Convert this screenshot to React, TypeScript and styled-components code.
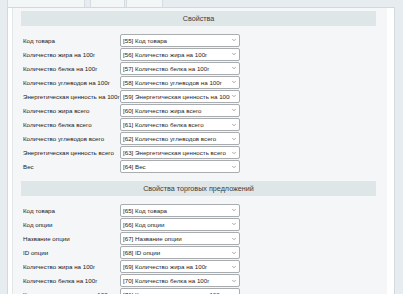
import styled, { createGlobalStyle } from "styled-components";
import { ChevronDown } from "lucide-react";

const GlobalStyle = createGlobalStyle`
  html, body {
    margin: 0;
    padding: 0;
    background: #e6ecef;
    font-family: "Liberation Sans", Arial, sans-serif;
    overflow: hidden;
  }
`;

const tabWidths = [76, 33, 35];

const sections = [
  {
    title: "Свойства",
    rows: [
      ["Код товара", "[55] Код товара"],
      ["Количество жира на 100г", "[56] Количество жира на 100г"],
      ["Количество белка на 100г", "[57] Количество белка на 100г"],
      ["Количество углеводов на 100г", "[58] Количество углеводов на 100г"],
      ["Энергетическая ценность на 100г", "[59] Энергетическая ценность на 100г"],
      ["Количество жира всего", "[60] Количество жира всего"],
      ["Количество белка всего", "[61] Количество белка всего"],
      ["Количество углеводов всего", "[62] Количество углеводов всего"],
      ["Энергетическая ценность всего", "[63] Энергетическая ценность всего"],
      ["Вес", "[64] Вес"],
    ],
  },
  {
    title: "Свойства торговых предложений",
    rows: [
      ["Код товара", "[65] Код товара"],
      ["Код опции", "[66] Код опции"],
      ["Название опции", "[67] Название опции"],
      ["ID опции", "[68] ID опции"],
      ["Количество жира на 100г", "[69] Количество жира на 100г"],
      ["Количество белка на 100г", "[70] Количество белка на 100г"],
      ["Количество углеводов на 100г", "[71] Количество углеводов на 100г"],
    ],
  },
];

const App = () => {
  return (
    <>
      <GlobalStyle />
      <TabBar>
        {tabWidths.map((w, i) => (
          <Tab key={i} $width={w} $first={i === 0} />
        ))}
      </TabBar>
      <Panel>
        <Inner>
          {sections.map((s) => (
            <Section key={s.title}>
              <SectionHead>{s.title}</SectionHead>
              <Rows>
                {s.rows.map(([label, value]) => (
                  <Row key={value}>
                    <Label>{label}</Label>
                    <SelectWrap>
                      <Select defaultValue={value}>
                        <option>{value}</option>
                      </Select>
                      <Chevron size={6} strokeWidth={2} />
                    </SelectWrap>
                  </Row>
                ))}
              </Rows>
            </Section>
          ))}
        </Inner>
      </Panel>
    </>
  );
};

const TabBar = styled.div`
  display: flex;
  height: 7px;
  padding-left: 7px;
`;

const Tab = styled.div<{ $width: number; $first: boolean }>`
  width: ${(p) => p.$width}px;
  margin-right: ${(p) => (p.$first ? 5 : 1)}px;
  height: 7px;
  background: #f3f6f7;
  border: 1px solid #d6dde1;
  border-top: none;
  border-bottom: none;
`;

const Panel = styled.div`
  margin: 0 8px 0 7px;
  border: 1px solid #d2d9dd;
  border-bottom: none;
  background: #ffffff;
  padding: 0 7px 0 4px;
  height: 300px;
`;

const Inner = styled.div`
  background: #f4f6f8;
  border-left: 1px solid #e1e6e9;
  padding: 3px 11px 0 8px;
  height: 100%;
`;

const Section = styled.div`
  margin-bottom: 8px;
`;

const SectionHead = styled.div`
  height: 15px;
  line-height: 15px;
  background: #dfe6e8;
  text-align: center;
  font-size: 7.2px;
  color: #3c3c3c;
`;

const Rows = styled.div`
  display: flex;
  flex-direction: column;
  gap: 1.1px;
  padding: 7.5px 0 0 2px;
`;

const Row = styled.div`
  display: flex;
  align-items: center;
  height: 13px;
`;

const Label = styled.div`
  width: 97px;
  font-size: 6.2px;
  line-height: 13px;
  color: #222;
  white-space: nowrap;
`;

const SelectWrap = styled.div`
  position: relative;
  width: 120px;
  height: 13px;
`;

const Select = styled.select`
  display: block;
  appearance: none;
  width: 100%;
  height: 100%;
  box-sizing: border-box;
  margin: 0;
  padding: 0 9px 0 2px;
  border: 1px solid #a9adb0;
  border-radius: 2px;
  background: #ffffff;
  font-family: "Liberation Sans", Arial, sans-serif;
  font-size: 6.2px;
  color: #1e1e1e;
  outline: none;
`;

const Chevron = styled(ChevronDown)`
  position: absolute;
  right: 3px;
  top: 3.5px;
  color: #555;
  pointer-events: none;
`;

export default App;
